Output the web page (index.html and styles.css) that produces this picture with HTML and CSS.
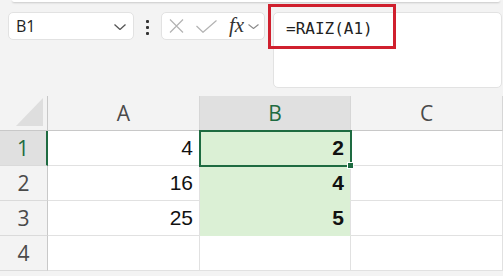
FILE: index.html
```html
<!DOCTYPE html>
<html lang="en">
<head>
    <meta charset="UTF-8">
    <title>Planilha - RAIZ</title>
    <link rel="stylesheet" href="styles.css">
</head>
<body>
    <div class="ribbon-edge"></div>

    <div class="toolbar">
        <div class="name-box">
            <span>B1</span>
            <svg class="chevron" width="12" height="6" viewBox="0 0 12 6"><path d="M0.5 0.5 L6 5.5 L11.5 0.5" fill="none" stroke="#555" stroke-width="1.3"/></svg>
        </div>
        <div class="more-dots">
            <span></span><span></span><span></span>
        </div>
        <div class="fx-group">
            <svg class="icon-x" width="15" height="14" viewBox="0 0 15 14"><path d="M1 0.5 L14 13.5 M14 0.5 L1 13.5" fill="none" stroke="#b3b3b3" stroke-width="1.2"/></svg>
            <svg class="icon-check" width="21" height="13" viewBox="0 0 21 13"><path d="M0.5 6 L7 12.3 L20.5 0.5" fill="none" stroke="#b3b3b3" stroke-width="1.2"/></svg>
            <span class="fx">fx</span>
            <svg class="chevron-sm" width="11" height="5" viewBox="0 0 11 5"><path d="M0.5 0.5 L5.5 4.5 L10.5 0.5" fill="none" stroke="#888" stroke-width="1.1"/></svg>
        </div>
        <div class="formula-bar">=RAIZ(A1)</div>
        <div class="highlight"></div>
    </div>

    <div class="sheet">
        <div class="corner">
            <svg width="28" height="29" viewBox="0 0 28 29"><polygon points="27,0 27,28 0,28" fill="#dedede"/></svg>
        </div>
        <div class="col-head">A</div>
        <div class="col-head active">B</div>
        <div class="col-head">C</div>

        <div class="row-head active">1</div>
        <div class="cell num">4</div>
        <div class="cell num result">2</div>
        <div class="cell"></div>

        <div class="row-head">2</div>
        <div class="cell num">16</div>
        <div class="cell num result">4</div>
        <div class="cell"></div>

        <div class="row-head">3</div>
        <div class="cell num">25</div>
        <div class="cell num result">5</div>
        <div class="cell"></div>

        <div class="row-head">4</div>
        <div class="cell"></div>
        <div class="cell"></div>
        <div class="cell"></div>

        <div class="selection"></div>
        <div class="fill-handle"></div>
    </div>
</body>
</html>
```

FILE: styles.css
```css
:root {
    --bg: #f3f3f3;
    --grid: #e1e1e1;
    --head-line: #c8c8c8;
    --green: #1e6b41;
    --green-fill: #dbf0d5;
    --head-active: #e0e0e0;
    --red: #d0202e;
}

body {
    margin: 0;
    width: 503px;
    height: 276px;
    overflow: hidden;
    background-color: var(--bg);
    font-family: 'Open Sans', 'Noto Sans', sans-serif;
    position: relative;
}

.ribbon-edge {
    height: 2px;
    margin: 0 3px 0 12px;
    background-color: #fff;
    border-radius: 0 0 6px 6px;
    box-shadow: 0 1px 2px rgba(0, 0, 0, 0.18);
}

.toolbar {
    position: relative;
    display: flex;
    align-items: flex-start;
    padding: 10px 0 0 8px;
    height: 84px;
}

.name-box {
    display: flex;
    align-items: center;
    justify-content: space-between;
    box-sizing: border-box;
    width: 126px;
    height: 28px;
    padding: 0 7px 0 7px;
    background-color: #fff;
    border: 1px solid #e2e2e2;
    border-radius: 5px;
    font-size: 16px;
    color: #222;
}

.name-box .chevron {
    margin-top: 1px;
}

.more-dots {
    display: flex;
    flex-direction: column;
    align-items: center;
    gap: 3px;
    width: 27px;
    padding-top: 8px;
}

.more-dots span {
    width: 3px;
    height: 3px;
    border-radius: 1px;
    background-color: #333;
}

.fx-group {
    display: flex;
    align-items: center;
    box-sizing: border-box;
    width: 104px;
    height: 28px;
    padding-left: 7px;
    background-color: #fff;
    border: 1px solid #e2e2e2;
    border-radius: 5px;
}

.icon-x {
    margin-right: 12px;
}

.icon-check {
    margin-right: 12px;
}

.fx {
    font-family: 'Liberation Serif', serif;
    font-style: italic;
    font-size: 21px;
    line-height: 20px;
    color: #333;
    margin-right: 4px;
    margin-top: -3px;
}

.formula-bar {
    box-sizing: border-box;
    width: 229px;
    height: 76px;
    margin-left: 8px;
    padding: 7px 0 0 12px;
    background-color: #fff;
    border: 1px solid #e2e2e2;
    border-radius: 5px;
    font-family: 'DejaVu Sans Mono', monospace;
    font-size: 16px;
    line-height: 18px;
    color: #222;
}

/* red annotation box drawn over the formula bar */
.highlight {
    position: absolute;
    left: 268px;
    top: 2px;
    width: 122px;
    height: 39px;
    border: 3px solid var(--red);
}

.sheet {
    position: relative;
    display: grid;
    grid-template-columns: 48px 152px 151px 152px;
    grid-template-rows: repeat(5, 35px);
}

.corner {
    display: flex;
    align-items: flex-end;
    justify-content: flex-end;
    padding: 0 3px 3px 0;
    border-right: 1px solid var(--head-line);
    border-bottom: 1px solid var(--head-line);
}

.col-head {
    display: flex;
    align-items: center;
    justify-content: center;
    font-size: 21px;
    color: #4a4a4a;
    border-right: 1px solid #d6d6d6;
    border-bottom: 1px solid var(--head-line);
}

.col-head.active {
    background-color: var(--head-active);
    color: var(--green);
}

.row-head {
    display: flex;
    align-items: center;
    justify-content: center;
    font-size: 21px;
    color: #4a4a4a;
    border-right: 1px solid var(--head-line);
    border-bottom: 1px solid #dadada;
}

.row-head.active {
    background-color: var(--head-active);
    color: var(--green);
    border-right: 2px solid var(--green);
}

.cell {
    background-color: #fff;
    border-right: 1px solid var(--grid);
    border-bottom: 1px solid var(--grid);
}

.num {
    display: flex;
    align-items: center;
    justify-content: flex-end;
    padding-right: 6px;
    font-family: 'Liberation Sans', Arial, sans-serif;
    font-size: 21px;
    color: #111;
}

.result {
    background-color: var(--green-fill);
    font-weight: bold;
    border-bottom-color: var(--green-fill);
}

.selection {
    position: absolute;
    left: 199px;
    top: 34px;
    width: 149px;
    height: 33px;
    border: 2px solid var(--green);
}

.fill-handle {
    position: absolute;
    left: 347px;
    top: 66px;
    width: 5px;
    height: 5px;
    background-color: var(--green);
    border: 1px solid #fff;
}
```
